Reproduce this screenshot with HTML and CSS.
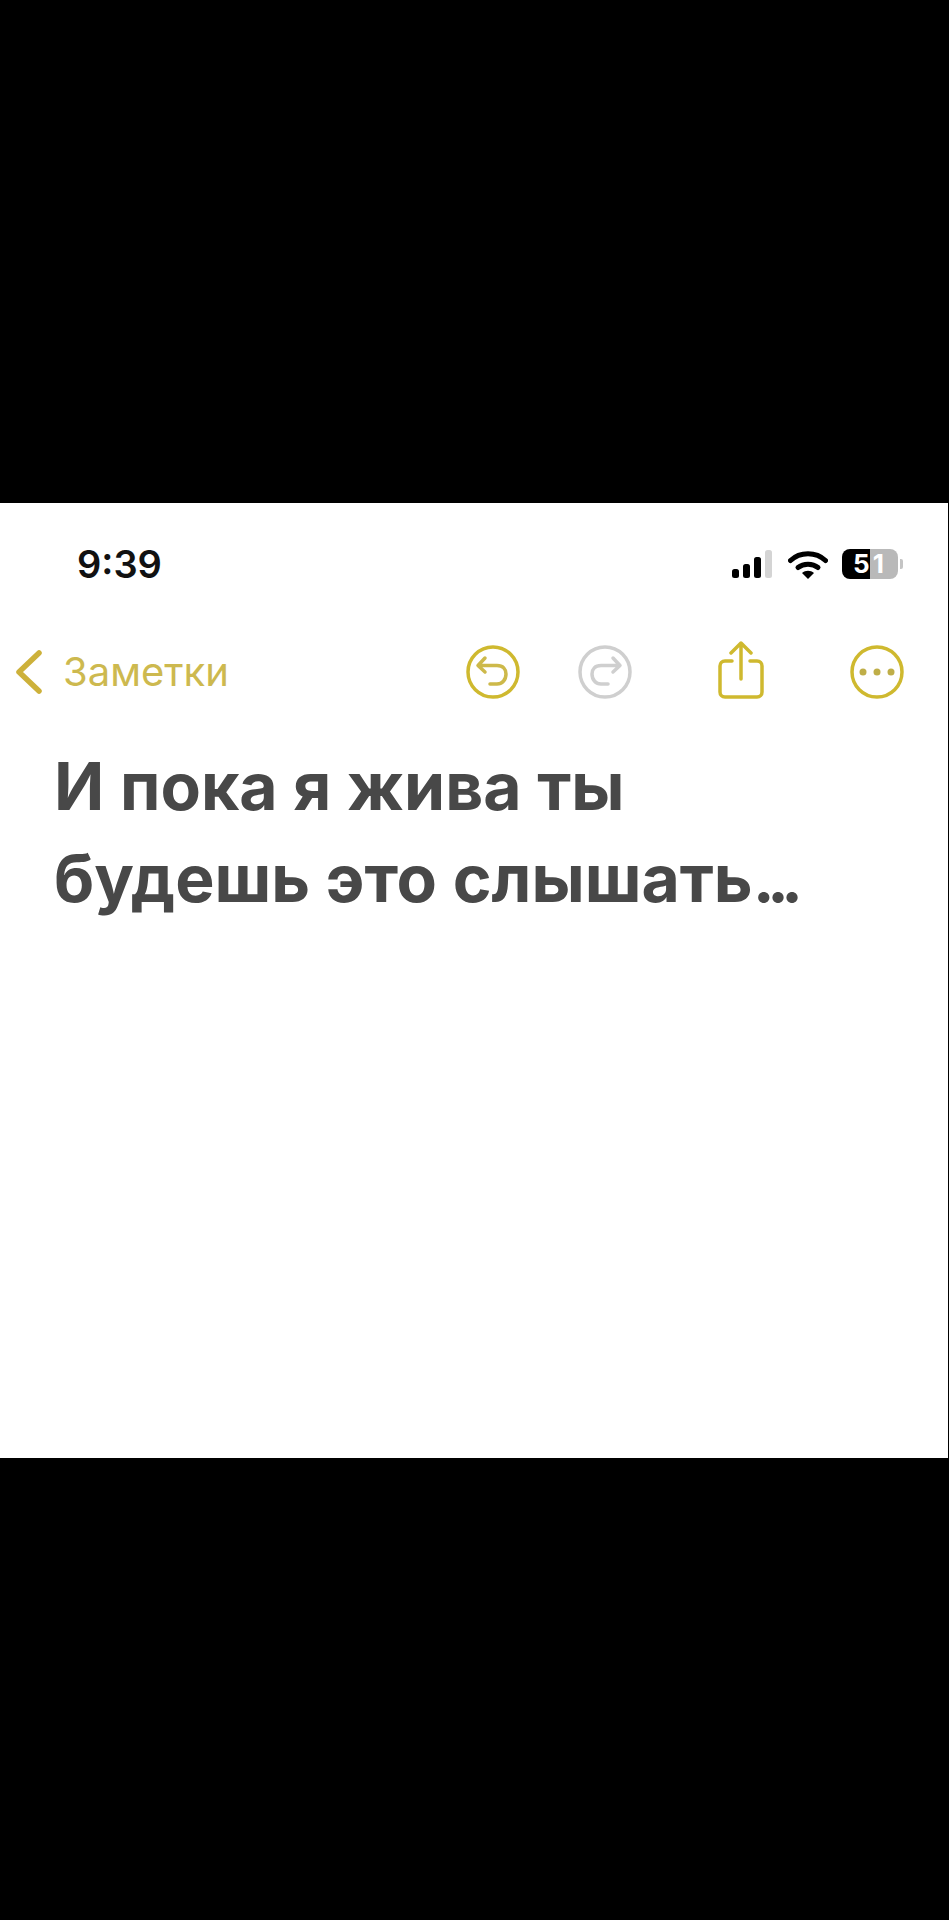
FILE: index.html
```html
<!DOCTYPE html>
<html lang="ru">
<head>
<meta charset="utf-8">
<title>Заметки</title>
<link rel="stylesheet" href="styles.css">
</head>
<body>
<main class="sheet">
  <div class="status">
    <span class="time">9:39</span>
    <div class="status-icons">
      <svg class="signal" width="41" height="28" viewBox="0 0 41 28">
        <rect x="0" y="19" width="7" height="9" rx="2.5" fill="#000"/>
        <rect x="11" y="14" width="7" height="14" rx="2.5" fill="#000"/>
        <rect x="22" y="7" width="7" height="21" rx="2.5" fill="#000"/>
        <rect x="33" y="0" width="7" height="28" rx="2.5" fill="#d4d4d4"/>
      </svg>
      <svg class="wifi" width="40" height="29" viewBox="0 0 40 29">
        <path d="M2.5 10.5C12 1.5 28 1.5 37.5 10.5" fill="none" stroke="#000" stroke-width="5" stroke-linecap="round"/>
        <path d="M10 17.5C15.500 13 24.500 13 30 17.500" fill="none" stroke="#000" stroke-width="5" stroke-linecap="round"/>
        <path d="M14 23L20 29L26 23C22.500 20 17.500 20 14 23Z" fill="#000"/>
      </svg>
      <div class="battery">
        <div class="battery-body"><span class="battery-level">51</span></div>
        <span class="battery-tip"></span>
      </div>
    </div>
  </div>
  <nav class="toolbar">
    <a class="back">
      <svg width="28" height="46" viewBox="0 0 28 46">
        <path d="M24 4L4 23L24 42" fill="none" stroke="#cdb13a" stroke-width="5.500" stroke-linecap="round" stroke-linejoin="round"/>
      </svg>
      <span class="back-label">Заметки</span>
    </a>
    <div class="actions">
      <svg class="act undo" width="56" height="56" viewBox="0 0 56 56">
        <circle cx="28" cy="28" r="25" fill="none" stroke="#cfb92f" stroke-width="3.500"/>
        <path d="M20 14L13 21.500L20 28M13.500 21.500H32C38 21.500 41 25 41 30C41 36 37 40 32 40H25" fill="none" stroke="#cdb94a" stroke-width="3.500" stroke-linecap="round" stroke-linejoin="round"/>
      </svg>
      <svg class="act redo" width="56" height="56" viewBox="0 0 56 56">
        <circle cx="28" cy="28" r="25" fill="none" stroke="#cfcfcf" stroke-width="3.500"/>
        <path d="M36 14L43 21.500L36 28M42.500 21.500H24C18 21.500 15 25 15 30C15 36 19 40 24 40H31" fill="none" stroke="#cfcfcf" stroke-width="3.500" stroke-linecap="round" stroke-linejoin="round"/>
      </svg>
      <svg class="act share" width="46" height="58" viewBox="0 0 46 58">
        <path d="M14 20H7C4 20 2 22 2 25V51C2 54 4 56 7 56H39C42 56 44 54 44 51V25C44 22 42 20 39 20H32" fill="none" stroke="#cfb92f" stroke-width="3.500" stroke-linecap="round"/>
        <path d="M23 38V3M13 12L23 2L33 12" fill="none" stroke="#cfb92f" stroke-width="3.500" stroke-linecap="round" stroke-linejoin="round"/>
      </svg>
      <svg class="act more" width="56" height="56" viewBox="0 0 56 56">
        <circle cx="28" cy="28" r="25" fill="none" stroke="#cfb92f" stroke-width="3.500"/>
        <circle cx="14" cy="28" r="3.500" fill="#bfae48"/>
        <circle cx="28" cy="28" r="3.500" fill="#bfae48"/>
        <circle cx="42" cy="28" r="3.500" fill="#bfae48"/>
      </svg>
    </div>
  </nav>
  <h1 class="note-title">И пока я жива ты<br>будешь это слышать<span class="dots">...</span></h1>
</main>
</body>
</html>
```
FILE: styles.css
```css
* {
  box-sizing: border-box;
}

html,
body {
  margin: 0;
  height: 100%;
  background: #000;
}

body {
  padding-top: 503px;
  font-family: Inter, "Liberation Sans", sans-serif;
}

.sheet {
  width: 948px;
  height: 955px;
  background: #fff;
  display: flex;
  flex-direction: column;
}

.status {
  display: flex;
  align-items: center;
  justify-content: space-between;
  padding: 30px 45px 0 77px;
  height: 92px;
}

.time {
  font-size: 38px;
  line-height: 36px;
  font-weight: 600;
  color: #111;
}

.status-icons {
  display: flex;
  align-items: center;
  gap: 15px;
}

.battery {
  display: flex;
  align-items: center;
  gap: 2px;
  margin-left: -1px;
}

.battery-body {
  width: 56px;
  height: 30px;
  border-radius: 8px;
  background: linear-gradient(90deg, #000 0 50%, #b9b9b9 50% 100%);
  display: flex;
  align-items: center;
  justify-content: center;
}

.battery-level {
  color: #fff;
  font-size: 26px;
  line-height: 30px;
  font-weight: 700;
  letter-spacing: 3px;
}

.battery-tip {
  width: 3px;
  height: 10px;
  border-radius: 0 2px 2px 0;
  background: #c4c4c4;
}

.toolbar {
  display: flex;
  align-items: center;
  justify-content: space-between;
  padding: 0 43px 0 15px;
  margin-top: 49px;
  height: 56px;
}

.back {
  display: flex;
  align-items: center;
  gap: 20px;
}

.back-label {
  font-size: 40px;
  line-height: 46px;
  color: #cdb94f;
}

.actions {
  display: flex;
  align-items: center;
}

.undo {
  margin-right: 56px;
}

.redo {
  margin-right: 85px;
}

.share {
  margin-right: 85px;
  margin-top: -4px;
}

.note-title {
  margin: 40px 0 0 54px;
  font-size: 66px;
  line-height: 92px;
  font-weight: 700;
  color: #484848;
}

.dots {
  font-feature-settings: "calt" 0, "liga" 0;
  letter-spacing: -0.12em;
}
```
